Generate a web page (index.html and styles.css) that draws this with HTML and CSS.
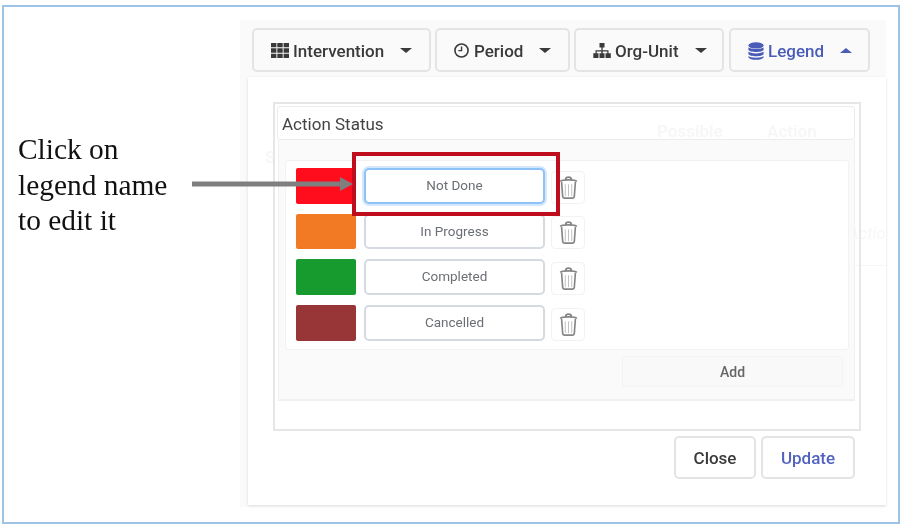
FILE: index.html
```html
<!DOCTYPE html>
<html lang="en">
<head>
  <meta charset="UTF-8" />
  <title>Action Status legend</title>
  <link rel="stylesheet" href="styles.css">
</head>
<body>
  <div class="frame">
    <div class="callout">Click on<br>legend name<br>to edit it</div>

    <div class="app">
      <div class="toolbar">
        <button class="tab tab-intervention">
          <svg class="tab-icon" viewBox="0 1 16 11.800" preserveAspectRatio="none"><path d="M0 1h4.800v3.400H0zM5.600 1h4.800v3.400H5.600zM11.200 1H16v3.400h-4.800zM0 5.200h4.800v3.400H0zM5.600 5.200h4.800v3.400H5.600zM11.200 5.200H16v3.400h-4.800zM0 9.400h4.800v3.400H0zM5.600 9.400h4.800v3.400H5.600zM11.200 9.400H16v3.400h-4.800z"/></svg>
          <span>Intervention</span><i class="caret"></i>
        </button>
        <button class="tab tab-period">
          <svg class="tab-icon" viewBox="0 0 16 16"><circle cx="8" cy="8" r="7" fill="none" stroke="currentColor" stroke-width="1.700"/><path d="M7.300 3.600h1.500v5.200H4.600V7.400h2.700z"/></svg>
          <span>Period</span><i class="caret"></i>
        </button>
        <button class="tab tab-org">
          <svg class="tab-icon" viewBox="0 0 18 15.500"><path d="M6.500 0h5v4.600H9.700v2.600h5.800v3h2.300v5H12.500v-5h1.800V8.400H9.700v1.800h1.800v5h-5v-5h1.800V8.400H3.700v1.800h1.800v5H.3v-5h2.200v-3h5.900V4.600H6.500z"/></svg>
          <span>Org-Unit</span><i class="caret"></i>
        </button>
        <button class="tab tab-legend">
          <svg class="tab-icon" viewBox="0 0 16 18"><ellipse cx="8" cy="3.400" rx="7.600" ry="3.200"/><path d="M.4 5.200C2 7.600 14 7.600 15.600 5.200v2.600c-1 3-14.200 3-15.200 0zM.4 9.600C2 12 14 12 15.600 9.600V12c-1 3-14.200 3-15.200 0zM.4 14c1.600 2.200 13.600 2.200 15.200 0v1.200c-1 3.400-14.200 3.400-15.200 0z"/></svg>
          <span>Legend</span><i class="caret caret-up"></i>
        </button>
      </div>

      <div class="modal">
        <div class="ghost ghost-s">S</div>
        <div class="ghost ghost-possible">Possible</div>
        <div class="ghost ghost-action">Action</div>
        <div class="ghost ghost-actio">Actio</div>
        <div class="ghost-line"></div>

        <div class="legend-box">
          <div class="legend-title">Action Status</div>
          <div class="legend-body">
            <div class="legend-list">
              <div class="legend-row">
                <span class="swatch swatch-red"></span>
                <div class="legend-name legend-name-focus">Not Done</div>
                <button class="trash"><svg viewBox="0 0 20 25"><use href="#trash-icon"/></svg></button>
              </div>
              <div class="legend-row">
                <span class="swatch swatch-orange"></span>
                <div class="legend-name">In Progress</div>
                <button class="trash"><svg viewBox="0 0 20 25"><use href="#trash-icon"/></svg></button>
              </div>
              <div class="legend-row">
                <span class="swatch swatch-green"></span>
                <div class="legend-name">Completed</div>
                <button class="trash"><svg viewBox="0 0 20 25"><use href="#trash-icon"/></svg></button>
              </div>
              <div class="legend-row">
                <span class="swatch swatch-brown"></span>
                <div class="legend-name">Cancelled</div>
                <button class="trash"><svg viewBox="0 0 20 25"><use href="#trash-icon"/></svg></button>
              </div>
            </div>
            <div class="add-row"><button class="add-btn">Add</button></div>
          </div>
        </div>

        <div class="modal-footer">
          <button class="foot-btn foot-close">Close</button>
          <button class="foot-btn foot-update">Update</button>
        </div>
      </div>
    </div>

    <div class="highlight"></div>
    <svg class="arrow" viewBox="0 0 161 14"><path d="M0 4.500h148V0l13 7-13 7V9.500H0z"/></svg>
  </div>

  <svg class="sprite">
    <symbol id="trash-icon" viewBox="0 0 20 25">
      <g fill="none" stroke="#858585">
        <path stroke-width="2" d="M1 6c2-2.400 16-2.400 18 0M7 3.500c0-3 6-3 6 0"/>
        <path stroke-width="1.800" d="M2.500 6.500l1.200 16c.1 1 .8 1.500 1.700 1.500h9.200c.9 0 1.600-.5 1.700-1.500l1.200-16"/>
        <path stroke-width="1" stroke="#bbb" d="M6.500 9v13M10 9v13M13.500 9v13"/>
      </g>
    </symbol>
  </svg>
</body>
</html>
```

FILE: styles.css
```css
* {
  box-sizing: border-box;
}

body {
  margin: 0;
  background-color: #fff;
  font-family: Roboto, sans-serif;
}

button {
  font-family: inherit;
  background: none;
  padding: 0;
}

.sprite {
  display: none;
}

/* the source is a slightly soft scaled-up capture */
.frame {
  position: relative;
  display: flex;
  width: 898px;
  height: 519px;
  margin: 5px 0 0 2px;
  border: 2px solid #9dc3e6;
  background-color: #fff;
  filter: blur(0.35px);
}

.callout {
  width: 236px;
  padding: 125px 0 0 14px;
  font-family: "Liberation Serif", serif;
  font-size: 29.400px;
  line-height: 35.500px;
  color: #111;
}

.app {
  width: 646px;
  height: 487px;
  margin-top: 13px;
  background-color: #fafafa;
}

.toolbar {
  display: flex;
  gap: 4px;
  padding: 8px 0 5px 12px;
}

.tab {
  display: flex;
  align-items: center;
  height: 44px;
  padding: 1px 0 0 17px;
  border: 2px solid #e4e4e4;
  border-radius: 5px;
  font-size: 17px;
  font-weight: 500;
  color: #3a3a3a;
  background-color: #fafafa;
}

.tab-icon {
  width: 18px;
  height: 15px;
  margin-right: 4px;
  fill: currentColor;
}

.caret {
  margin-left: 16px;
  border-left: 6px solid transparent;
  border-right: 6px solid transparent;
  border-top: 5px solid currentColor;
}

.caret-up {
  border-top: 0;
  border-bottom: 5px solid currentColor;
}

.tab-intervention { width: 179px; }
.tab-period { width: 135px; }
.tab-period .tab-icon { width: 15px; margin-right: 5px; }
.tab-org { width: 150px; margin-right: 1px; }
.tab-org .tab-icon { height: 15.500px; }
.tab-legend { width: 141px; color: #4a5cb8; }
.tab-legend .tab-icon { width: 16px; height: 18px; margin-right: 4px; }

.modal {
  position: relative;
  width: 638px;
  height: 428px;
  margin-left: 8px;
  padding: 25px 25px 0;
  background-color: #fff;
  box-shadow: 0 1px 3px rgba(0, 0, 0, 0.12);
}

.ghost {
  position: absolute;
  font-size: 17px;
  font-weight: 700;
  color: #f7f7f7;
}

.ghost-s { left: 17px; top: 70px; }
.ghost-possible { left: 409px; top: 44px; }
.ghost-action { left: 519px; top: 44px; }
.ghost-actio { left: 596px; top: 146px; width: 42px; overflow: hidden; font-style: italic; font-weight: 400; direction: rtl; }

.ghost-line {
  position: absolute;
  left: 602px;
  top: 188px;
  width: 36px;
  height: 1px;
  background-color: #f6f6f6;
}

.legend-box {
  position: relative;
  height: 329px;
  padding: 2px 4px 0 2px;
  border: 2px solid #e6e6e6;
}

.legend-title {
  height: 34px;
  padding-left: 4px;
  border: 1px solid #ececec;
  border-radius: 3px;
  font-size: 17px;
  line-height: 34px;
  color: #444;
}

.legend-body {
  height: 261px;
  margin-left: 1px;
  padding: 20px 5px 0 6px;
  background-color: #fafafa;
  border: solid #f0f0f0;
  border-width: 0 1px 2px;
}

.legend-list {
  height: 190px;
  padding: 7px 10px;
  background-color: #fff;
  border-radius: 3px;
  border: 1px solid #f2f2f2;
}

.legend-row {
  display: flex;
  height: 35.500px;
  margin-bottom: 10.200px;
}

.swatch {
  width: 60px;
  margin-right: 8px;
  border-radius: 2px;
}

.swatch-red { background-color: #ff0d1d; }
.swatch-orange { background-color: #f37a25; }
.swatch-green { background-color: #179a2e; }
.swatch-brown { background-color: #983537; }

.legend-name {
  width: 181px;
  margin-right: 6px;
  border: 2px solid #d5dae1;
  border-radius: 5px;
  background-color: #fff;
  text-align: center;
  font-size: 13.500px;
  line-height: 31px;
  color: #6b6f75;
}

.legend-name-focus {
  border-color: #8fc3f7;
  box-shadow: 0 0 0 2px #d3e8fd;
}

.trash {
  display: flex;
  align-self: flex-end;
  align-items: center;
  justify-content: center;
  width: 34px;
  height: 33px;
  border: 1px solid #f2f2f2;
  border-radius: 4px;
}

.trash svg {
  width: 19px;
  height: 23px;
}

.add-row {
  display: flex;
  justify-content: flex-end;
  padding: 6px 6px 0 0;
}

.add-btn {
  width: 221px;
  height: 31px;
  padding-top: 1px;
  border: 1px solid #f3f3f3;
  border-radius: 3px;
  background-color: #f9f9f9;
  font-size: 14px;
  font-weight: 500;
  color: #666;
}

.modal-footer {
  display: flex;
  justify-content: flex-end;
  gap: 5px;
  margin-top: 5px;
  padding-right: 6px;
}

.foot-btn {
  height: 43px;
  padding-top: 1px;
  border: 2px solid #e4e4e4;
  border-radius: 5px;
  background-color: #fff;
  font-size: 17px;
  font-weight: 500;
  color: #3a3a3a;
}

.foot-close { width: 82px; }
.foot-update { width: 94px; color: #5263bf; }

.highlight {
  position: absolute;
  left: 348px;
  top: 145px;
  width: 208px;
  height: 64px;
  border: 4px solid #c00d1e;
}

.arrow {
  position: absolute;
  left: 188px;
  top: 170px;
  width: 161px;
  height: 14px;
  fill: #7f7f7f;
}
```
